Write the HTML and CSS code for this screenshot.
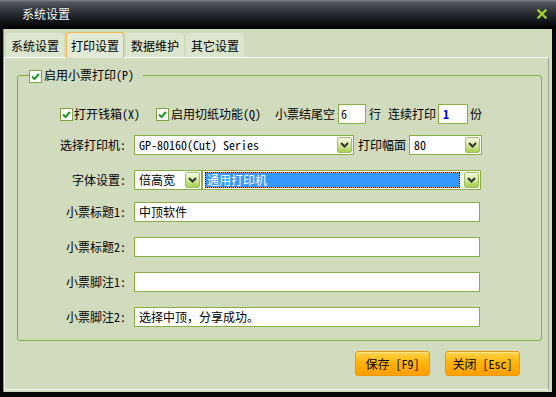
FILE: index.html
```html
<!DOCTYPE html>
<html lang="zh-CN">
<head>
  <meta charset="UTF-8" />
  <title>系统设置</title>
  <link rel="stylesheet" href="styles.css">
</head>
<body>
  <div class="window">
    <div class="titlebar">
      <span class="title">系统设置</span>
      <svg class="close" width="10" height="10" viewBox="0 0 10 10">
        <path d="M1.5 1.5 L8.5 8.5 M8.5 1.5 L1.5 8.5" stroke="#9fd034" stroke-width="2.4" stroke-linecap="square"/>
      </svg>
    </div>

    <div class="body">
      <div class="tabs">
        <div class="tab">系统设置</div>
        <div class="tab active">打印设置</div>
        <div class="tab">数据维护</div>
        <div class="tab">其它设置</div>
      </div>

      <div class="panel">
        <fieldset class="group">
          <legend><span class="chk"><svg width="11" height="11" viewBox="0 0 11 11"><path d="M2 5.5 L4.5 8 L9 3" fill="none" stroke="#1f9a1f" stroke-width="2"/></svg></span>启用小票打印(P)</legend>

          <div class="row r1">
            <span class="chk"><svg width="11" height="11" viewBox="0 0 11 11"><path d="M2 5.5 L4.5 8 L9 3" fill="none" stroke="#1f9a1f" stroke-width="2"/></svg></span>
            <span class="opt">打开钱箱(X)</span>
            <span class="chk second"><svg width="11" height="11" viewBox="0 0 11 11"><path d="M2 5.5 L4.5 8 L9 3" fill="none" stroke="#1f9a1f" stroke-width="2"/></svg></span>
            <span class="opt">启用切纸功能(Q)</span>
            <span class="tail-lbl">小票结尾空</span>
            <span class="field num">6</span>
            <span class="unit">行</span>
            <span class="copies-lbl">连续打印</span>
            <span class="field num copies">1</span>
            <span class="unit2">份</span>
          </div>

          <div class="row r2">
            <span class="lbl">选择打印机:</span>
            <div class="field sel printer">
              <span class="val">GP-80160(Cut) Series</span>
              <span class="drop"><svg width="9" height="6" viewBox="0 0 9 6"><path d="M1 1 L4.5 4.5 L8 1" fill="none" stroke="#333" stroke-width="2"/></svg></span>
            </div>
            <span class="width-lbl">打印幅面</span>
            <div class="field sel paper">
              <span class="val">80</span>
              <span class="drop"><svg width="9" height="6" viewBox="0 0 9 6"><path d="M1 1 L4.5 4.5 L8 1" fill="none" stroke="#333" stroke-width="2"/></svg></span>
            </div>
          </div>

          <div class="row r3">
            <span class="lbl">字体设置:</span>
            <div class="field sel size">
              <span class="val">倍高宽</span>
              <span class="drop"><svg width="9" height="6" viewBox="0 0 9 6"><path d="M1 1 L4.5 4.5 L8 1" fill="none" stroke="#333" stroke-width="2"/></svg></span>
            </div>
            <div class="field sel font">
              <span class="val hl">通用打印机</span>
              <span class="drop"><svg width="9" height="6" viewBox="0 0 9 6"><path d="M1 1 L4.5 4.5 L8 1" fill="none" stroke="#333" stroke-width="2"/></svg></span>
            </div>
          </div>

          <div class="row r4">
            <span class="lbl">小票标题1:</span>
            <span class="field inp">中顶软件</span>
          </div>
          <div class="row rn">
            <span class="lbl">小票标题2:</span>
            <span class="field inp"></span>
          </div>
          <div class="row rn">
            <span class="lbl">小票脚注1:</span>
            <span class="field inp"></span>
          </div>
          <div class="row rn">
            <span class="lbl">小票脚注2:</span>
            <span class="field inp">选择中顶，分享成功。</span>
          </div>
        </fieldset>

        <div class="actions">
          <button type="button" class="btn">保存 [F9]</button>
          <button type="button" class="btn">关闭 [Esc]</button>
        </div>
      </div>
    </div>
  </div>
</body>
</html>
```

FILE: styles.css
```css
* {
  box-sizing: border-box;
}

html, body {
  margin: 0;
  padding: 0;
}

body {
  font-family: "Noto Sans Mono CJK SC", "Noto Sans CJK SC", sans-serif;
  font-size: 12px;
  line-height: 14px;
  color: #000;
  background: #000;
}

.window {
  width: 556px;
  height: 397px;
  display: flex;
  flex-direction: column;
  background: #060606;
}

.titlebar {
  height: 29px;
  flex: none;
  display: flex;
  align-items: center;
  justify-content: space-between;
  padding: 0 9px 1px 22px;
  color: #fff;
  background: linear-gradient(#80858b 0, #555a61 2px, #33383e 10px, #101316 22px, #000 29px);
}

.title {
  text-shadow: 0 0 1px #000;
}

.body {
  flex: 1;
  display: flex;
  flex-direction: column;
  margin: 0 4px 5px 3px;
  background: #d1dcbf;
  border-left: 1px solid #8e9489;
}

.tabs {
  height: 28px;
  flex: none;
  display: flex;
  align-items: flex-end;
  gap: 2px;
  padding: 3px 0 0 2px;
}

.tab {
  width: 58px;
  height: 24px;
  display: flex;
  align-items: center;
  justify-content: center;
  padding-top: 1px;
  background: #dce5cd;
  border-radius: 3px 3px 0 0;
}

.tab.active {
  height: 26px;
  margin-bottom: -1px;
  position: relative;
  z-index: 1;
  padding-top: 0;
  background: #e2e9d6;
  border: 1px solid #f0b84a;
  border-bottom: none;
}

.panel {
  flex: 1;
  margin: 0 3px 2px 0;
  border-top: 1px solid #fff;
  border-left: 1px solid #f3f6ee;
  border-right: 1px solid #9ea394;
  border-bottom: 1px solid #f3f6ee;
}

.group {
  width: 525px;
  min-width: 0;
  margin: 10px 0 0 12px;
  padding: 0 0 13px 0;
  border: 1px solid #86aa3c;
  border-radius: 3px;
}

.group legend {
  margin-left: 11px;
  padding: 0 9px 0 0;
  line-height: 14px;
}

.chk {
  width: 13px;
  height: 13px;
  display: inline-flex;
  align-items: center;
  justify-content: center;
  margin-right: 2px;
  vertical-align: -2px;
  background: #fff;
  border: 1px solid #7ea03e;
  flex: none;
}

.row {
  display: flex;
  align-items: center;
  height: 20px;
}

.r1 {
  margin-top: 21px;
  padding-left: 42px;
}

.r1 .chk {
  margin-right: 1px;
}

.r1 .chk.second {
  margin-left: 16px;
  margin-right: 2px;
}

.tail-lbl {
  margin-left: 14px;
}

.num {
  width: 28px;
  margin-left: 3px;
  padding-left: 2px;
  display: flex;
  align-items: center;
}

.num.copies {
  width: 30px;
  margin-left: 2px;
  padding-left: 4px;
  color: #0000f0;
  font-weight: bold;
}

.unit {
  margin-left: 3px;
}

.copies-lbl {
  margin-left: 7px;
}

.unit2 {
  margin-left: 2px;
}

.r2 {
  margin-top: 11px;
}

.r3 {
  margin-top: 15px;
}

.r4 {
  margin-top: 12px;
}

.rn {
  margin-top: 15px;
}

.lbl {
  width: 108px;
  margin-right: 8px;
  text-align: right;
  flex: none;
}

.field {
  height: 20px;
  background: #fff;
  border: 1px solid #8aae42;
  flex: none;
}

.inp {
  width: 346px;
  padding-left: 4px;
  display: flex;
  align-items: center;
}

.sel {
  display: flex;
  align-items: center;
  padding: 0 1px 0 4px;
}

.sel .val {
  flex: 1;
  white-space: nowrap;
  line-height: 16px;
}

.printer {
  width: 220px;
}

.width-lbl {
  margin-left: 4px;
}

.paper {
  width: 73px;
  margin-left: 3px;
}

.size {
  width: 68px;
}

.font {
  width: 279px;
  padding-left: 2px;
}

.sel .hl {
  height: 16px;
  margin-right: 4px;
  padding-left: 1px;
  color: #fff;
  line-height: 14px;
  border: 1px dotted #000;
  background: linear-gradient(#3399ff, #3399ff) padding-box, #f09a2a border-box;
}

.drop {
  width: 15px;
  height: 16px;
  flex: none;
  display: flex;
  align-items: center;
  justify-content: center;
  border: 1px solid #9fc062;
  border-radius: 2px;
  background: linear-gradient(#f6fbe2, #cfe796 55%, #a8cf4c);
}

.actions {
  display: flex;
  justify-content: flex-end;
  gap: 15px;
  margin-top: 10px;
  padding-right: 28px;
}

.btn {
  width: 75px;
  height: 25px;
  padding: 0;
  font: inherit;
  color: #000;
  border: 1px solid #e8990f;
  border-radius: 3px;
  background: linear-gradient(#ffd54c, #ffb40a 45%, #ff9e00);
  box-shadow: inset 0 1px 0 #ffe48a;
}
```
